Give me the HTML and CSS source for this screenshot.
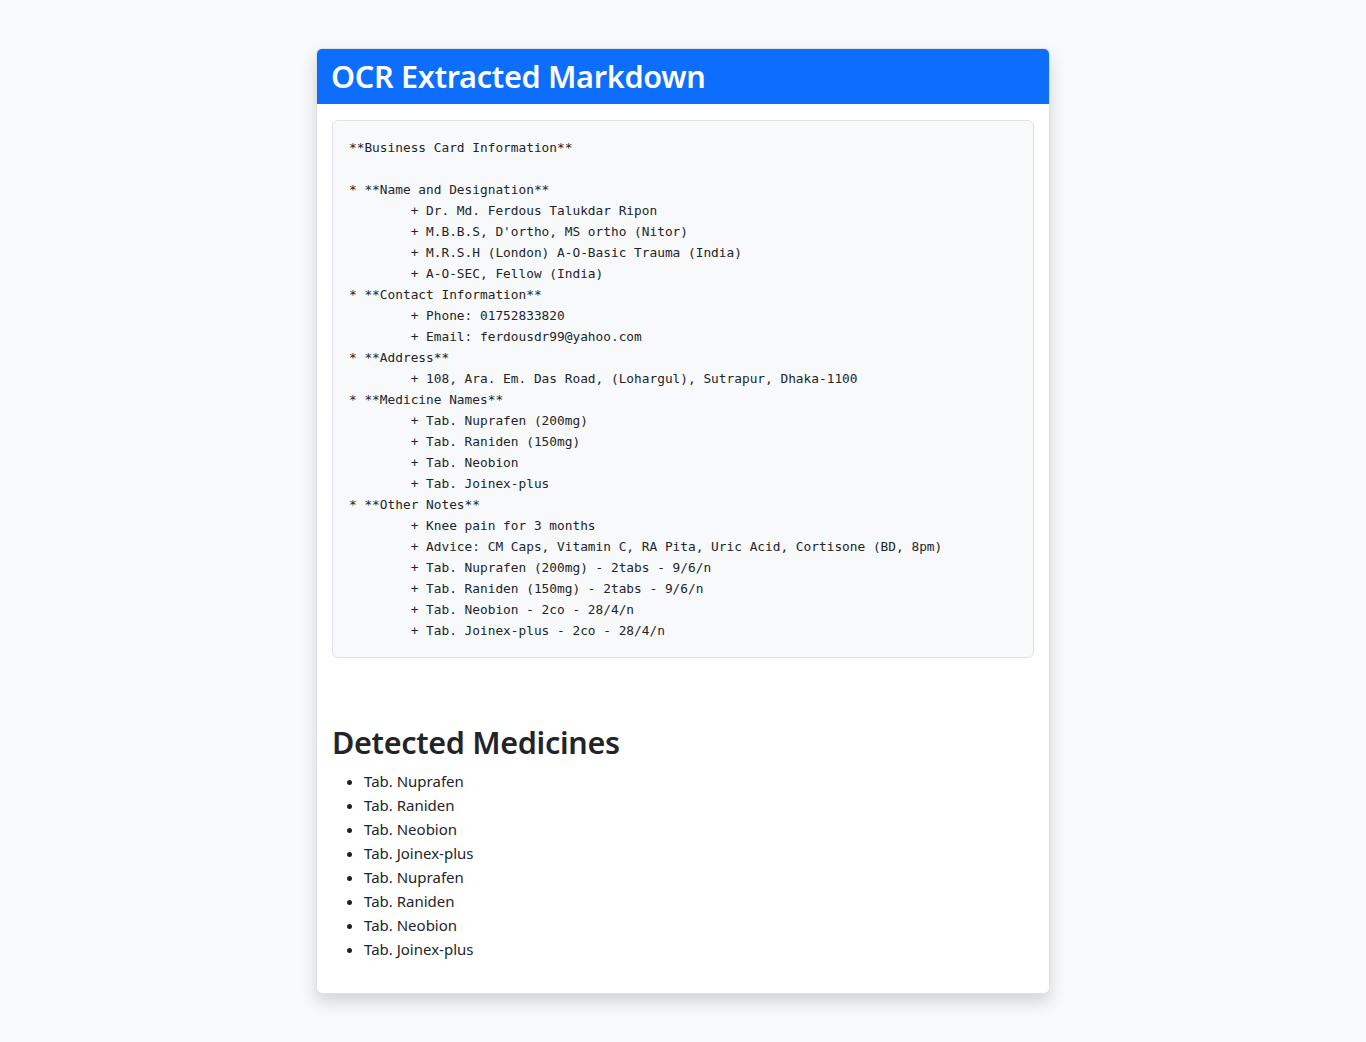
FILE: index.html
```html
<!DOCTYPE html>
<html lang="en">
<head>
<meta charset="utf-8">
<title>OCR Extracted Markdown</title>
<link rel="stylesheet" href="styles.css">
</head>
<body>
<div class="page">
  <div class="card">
    <div class="card-header">
      <h1 class="title">OCR Extracted Markdown</h1>
    </div>
    <div class="card-body">
<pre class="markdown">**Business Card Information**

* **Name and Designation**
	+ Dr. Md. Ferdous Talukdar Ripon
	+ M.B.B.S, D'ortho, MS ortho (Nitor)
	+ M.R.S.H (London) A-O-Basic Trauma (India)
	+ A-O-SEC, Fellow (India)
* **Contact Information**
	+ Phone: 01752833820
	+ Email: ferdousdr99@yahoo.com
* **Address**
	+ 108, Ara. Em. Das Road, (Lohargul), Sutrapur, Dhaka-1100
* **Medicine Names**
	+ Tab. Nuprafen (200mg)
	+ Tab. Raniden (150mg)
	+ Tab. Neobion
	+ Tab. Joinex-plus
* **Other Notes**
	+ Knee pain for 3 months
	+ Advice: CM Caps, Vitamin C, RA Pita, Uric Acid, Cortisone (BD, 8pm)
	+ Tab. Nuprafen (200mg) - 2tabs - 9/6/n
	+ Tab. Raniden (150mg) - 2tabs - 9/6/n
	+ Tab. Neobion - 2co - 28/4/n
	+ Tab. Joinex-plus - 2co - 28/4/n</pre>
      <h2 class="section-title">Detected Medicines</h2>
      <ul class="med-list">
        <li>Tab. Nuprafen</li>
        <li>Tab. Raniden</li>
        <li>Tab. Neobion</li>
        <li>Tab. Joinex-plus</li>
        <li>Tab. Nuprafen</li>
        <li>Tab. Raniden</li>
        <li>Tab. Neobion</li>
        <li>Tab. Joinex-plus</li>
      </ul>
    </div>
  </div>
</div>
</body>
</html>
```

FILE: styles.css
```css
* { box-sizing: border-box; }
html, body { margin: 0; padding: 0; }
body {
  background: #f8f9fa;
  color: #212529;
  font-family: "Noto Sans", "Open Sans", sans-serif;
  font-size: 16px;
  line-height: 1.5;
}
.page {
  padding: 48px 0;
  display: flex;
  justify-content: center;
}
.card {
  width: 734px;
  background: #fff;
  border: 1px solid rgba(0,0,0,0.12);
  border-radius: 6px;
  box-shadow: 0 8px 16px rgba(0,0,0,0.15);
  overflow: hidden;
}
.card-header {
  background: #0d6efd;
  height: 55px;
  padding: 0 15px;
  display: flex;
  align-items: center;
}
.title {
  margin: 0 0 0 -1px;
  color: #fff;
  font-size: 30.6px;
  font-weight: 600;
  line-height: 1.2;
  letter-spacing: -0.3px;
}
.card-body {
  padding: 16px 15px 16px 15px;
}
.markdown {
  margin: 0 0 16px 0;
  padding: 16px;
  background: #f8f9fa;
  border: 1px solid #dee2e6;
  border-radius: 6px;
  font-family: "DejaVu Sans Mono", "Liberation Mono", monospace;
  font-size: 12.8px;
  line-height: 21px;
  color: #212529;
  tab-size: 8;
  white-space: pre;
}
.section-title {
  margin: 66px 0 8px 0;
  font-size: 30.5px;
  font-weight: 600;
  line-height: 1.2;
  letter-spacing: -0.3px;
  color: #212529;
}
.med-list {
  margin: 0 0 16px 0;
  padding-left: 32px;
  font-size: 15px;
  line-height: 24px;
}
```
